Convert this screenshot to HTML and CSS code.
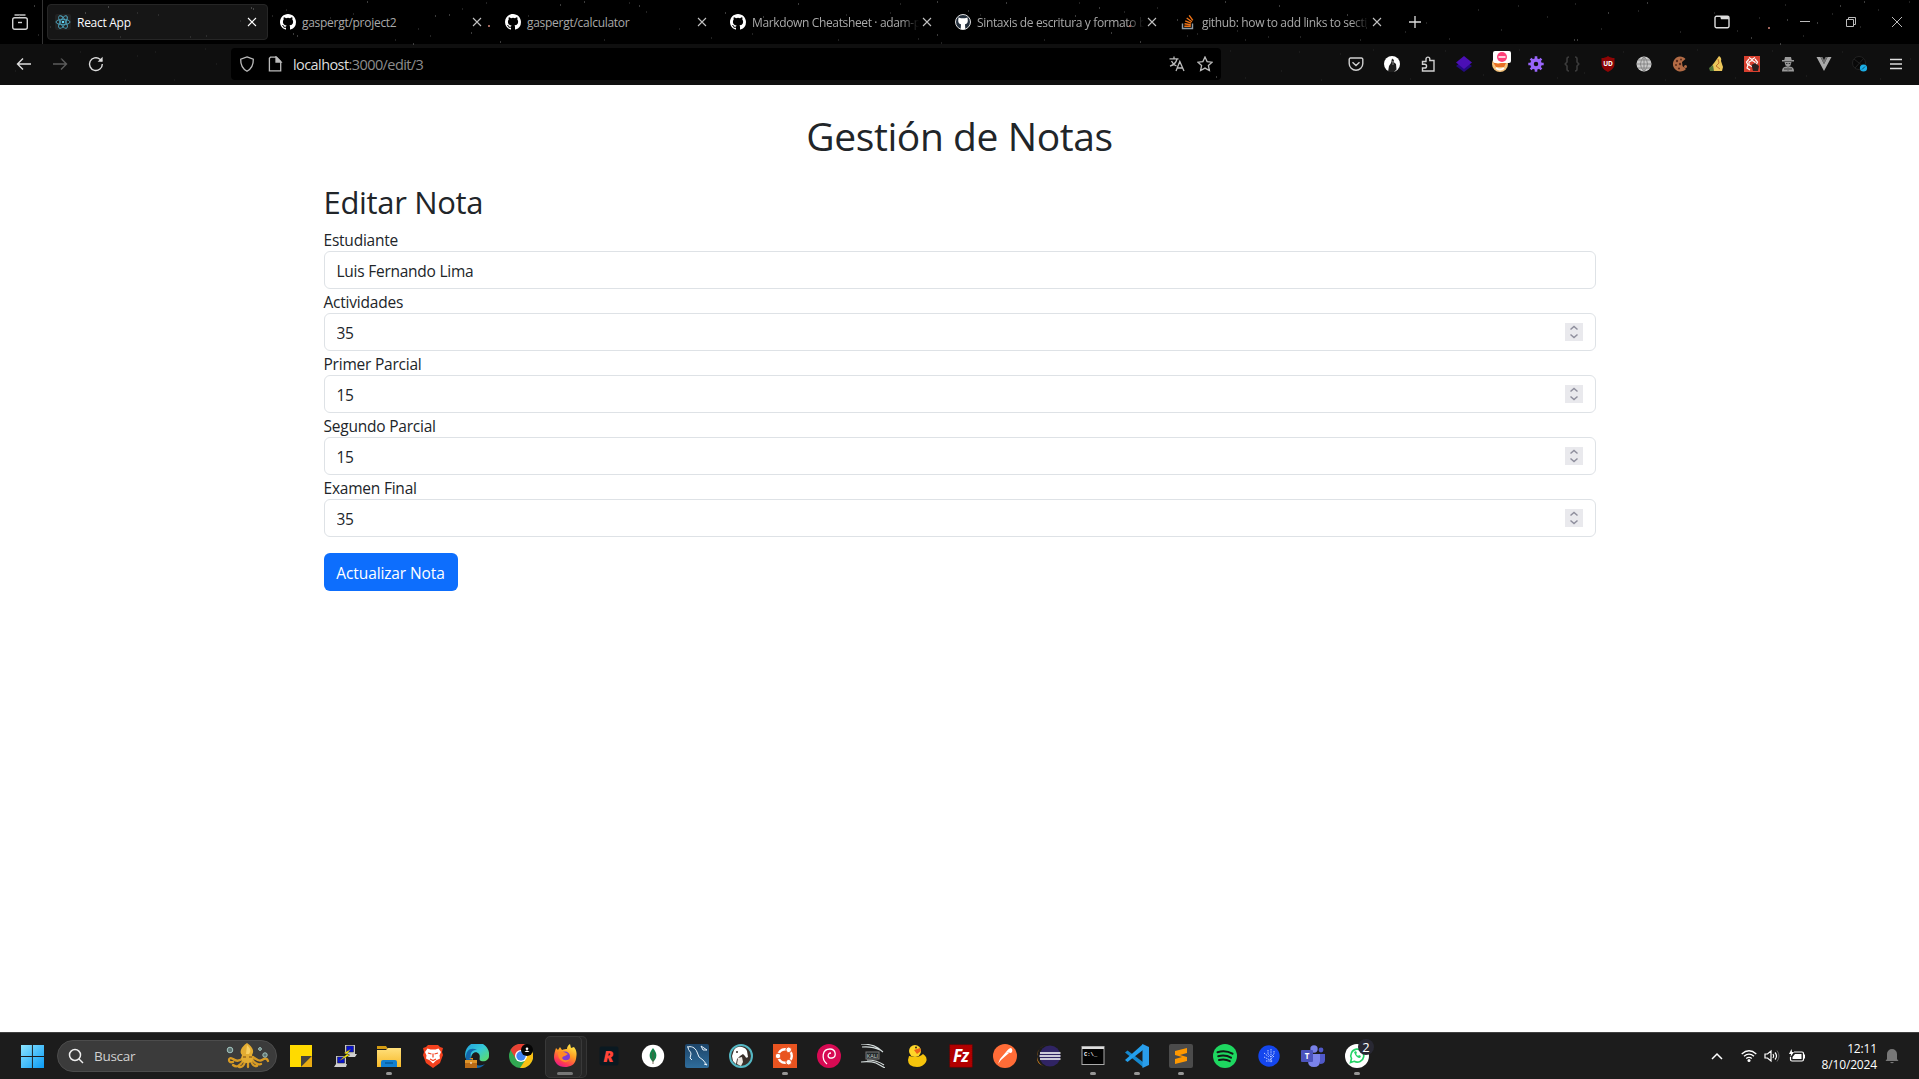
FILE: index.html
```html
<!DOCTYPE html>
<html lang="es">
<head>
<meta charset="utf-8">
<title>React App</title>
<link rel="stylesheet" href="styles.css">
</head>
<body>
<svg class="defs" width="0" height="0" aria-hidden="true">
  <defs>
    <linearGradient id="win" x1="0" y1="0" x2="1" y2="1"><stop offset="0" stop-color="#8be4ff"/><stop offset="1" stop-color="#0a9bf5"/></linearGradient>
    <linearGradient id="fold" x1="0" y1="0" x2="0" y2="1"><stop offset="0" stop-color="#ffe07c"/><stop offset="1" stop-color="#f7b928"/></linearGradient>
    <linearGradient id="edge" x1="0" y1="0" x2="1" y2="1"><stop offset="0" stop-color="#1f9de0"/><stop offset=".5" stop-color="#35c9d8"/><stop offset="1" stop-color="#62df5a"/></linearGradient>
    <linearGradient id="fox" x1=".8" y1="0" x2=".3" y2="1"><stop offset="0" stop-color="#fff04a"/><stop offset=".45" stop-color="#ff9a22"/><stop offset=".8" stop-color="#ff3b52"/><stop offset="1" stop-color="#e6198c"/></linearGradient>
    <linearGradient id="sql" x1="0" y1="0" x2="0" y2="1"><stop offset="0" stop-color="#1d4468"/><stop offset="1" stop-color="#2f6d9c"/></linearGradient>
    <symbol id="close" viewBox="0 0 16 16"><path d="M4 4l8 8M12 4l-8 8" fill="none" stroke="currentColor" stroke-width="1.1"/></symbol>
    <symbol id="github" viewBox="0 0 16 16"><path fill="#fff" d="M8 0C3.58 0 0 3.58 0 8c0 3.54 2.29 6.53 5.47 7.59.4.07.55-.17.55-.38 0-.19-.01-.82-.01-1.49-2.01.37-2.53-.49-2.69-.94-.09-.23-.48-.94-.82-1.13-.28-.15-.68-.52-.01-.53.63-.01 1.08.58 1.23.82.72 1.21 1.87.87 2.33.66.07-.52.28-.87.51-1.07-1.78-.2-3.64-.89-3.64-3.95 0-.87.31-1.59.82-2.15-.08-.2-.36-1.02.08-2.12 0 0 .67-.21 2.2.82a7.6 7.6 0 0 1 4 0c1.53-1.04 2.2-.82 2.2-.82.44 1.1.16 1.92.08 2.12.51.56.82 1.27.82 2.15 0 3.07-1.87 3.75-3.65 3.95.29.25.54.73.54 1.48 0 1.07-.01 1.93-.01 2.2 0 .21.15.46.55.38A8.01 8.01 0 0 0 16 8c0-4.42-3.58-8-8-8z"/></symbol>
  </defs>
</svg>

<header class="browser">
  <svg class="stars" viewBox="0 0 1919 85" aria-hidden="true">
    <path stroke="#777" d="M85 13h1M108 7h1M34 6h1M253 9h1M251 8h1M293 34h1M297 36h1M367 2h1M435 16h1M449 15h1M471 33h1M413 44h1M560 5h1M584 2h1M639 6h1M500 42h1M725 13h1M798 4h1M763 17h1M937 2h1M937 35h1M968 11h1M1006 3h1M1111 33h1M1099 8h1M1140 42h1M1075 16h1M1225 2h1M1279 6h1M1177 20h1M1347 15h1M1574 40h1M1577 40h1M1608 13h1M1647 3h1M1751 38h1M1780 44h1M1787 20h1M1817 23h1M1840 6h1M1864 2h1M1216 77h1"/>
    <path stroke="#444" d="M19 16h1M38 35h1M50 27h1M120 37h1M137 13h1M158 15h1M190 37h1M206 36h1M240 21h1M272 16h1M286 10h1M330 18h1M353 14h1M341 27h1M363 24h1M395 40h1M418 29h1M430 36h1M462 9h1M486 3h1M528 16h1M542 29h1M574 24h1M604 40h1M629 3h1M646 12h1M679 29h1M711 38h1M752 34h1M789 28h1M838 40h1M846 15h1M890 13h1M900 4h1M918 39h1M941 43h1M980 15h1M1028 24h1M1044 40h1M1079 3h1M1124 12h1M1157 8h1M1187 36h1M1197 34h1M1237 31h1M1245 40h1M1268 37h1M1300 37h1M1316 18h1M1360 40h1M1366 28h1M1405 32h1M1426 23h1M1449 39h1M1478 10h1M1501 30h1M1518 6h1M1547 17h1M1575 4h1M1601 29h1M1638 11h1M1680 32h1M1714 13h1M1737 31h1M1759 18h1M1785 5h1M1803 36h1M1832 14h1M1860 27h1M1878 10h1M1909 2h1"/>
    <path stroke="#292929" d="M15 71h1M61 59h1M80 52h1M125 80h1M137 56h1M155 52h1M174 80h1M216 64h1M205 49h1M1230 51h1M1245 78h1M1281 71h1M1299 52h1M1321 80h1M1340 54h1M1373 50h1M1410 79h1M1445 51h1M1483 75h1M1519 50h1M1557 78h1M1584 73h1M1623 52h1M1665 80h1M1697 50h1M1735 78h1M1772 51h1M1806 76h1M1842 52h1M1880 79h1M1910 59h1"/>
    <path stroke="#a0645a" stroke-width="2" d="M488 26h2M1768 28h2M1129 26h2"/>
  </svg>
  <div class="tabbar">
    <div class="tabview"><svg width="16" height="16" viewBox="0 0 16 16" fill="none" stroke="#d2d2d2" stroke-width="1.4"><path d="M2.500 1h11"/><rect x=".7" y="3.800" width="14.600" height="11.500" rx="2"/><path d="M6 8.500h4"/></svg></div>
    <div class="tabs">
      <div class="tab active"><svg class="fav" viewBox="0 0 16 16"><rect width="16" height="16" rx="2" fill="#222"/><g fill="none" stroke="#4ea6c0" stroke-width=".9"><ellipse cx="8" cy="8" rx="7" ry="2.700"/><ellipse cx="8" cy="8" rx="7" ry="2.700" transform="rotate(60 8 8)"/><ellipse cx="8" cy="8" rx="7" ry="2.700" transform="rotate(120 8 8)"/></g><circle cx="8" cy="8" r="1.300" fill="#61dafb"/></svg><span class="title">React App</span><svg class="x"><use href="#close"/></svg></div>
      <div class="tab"><svg class="fav"><use href="#github"/></svg><span class="title">gaspergt/project2</span><svg class="x"><use href="#close"/></svg></div>
      <div class="tab"><svg class="fav"><use href="#github"/></svg><span class="title">gaspergt/calculator</span><svg class="x"><use href="#close"/></svg></div>
      <div class="tab"><svg class="fav"><use href="#github"/></svg><span class="title long">Markdown Cheatsheet · adam-p</span><svg class="x"><use href="#close"/></svg></div>
      <div class="tab"><svg class="fav" viewBox="0 0 16 16"><circle cx="8" cy="8" r="7.500" fill="#24303d" stroke="#ddd"/><path fill="#fff" d="M3.500 3.500 6 4.300h4l2.500-.8.3 3.200c0 2.400-1.300 3.300-2.800 3.600l.3 5H5.700l.3-5C4.500 10 3.200 9 3.200 6.700z"/></svg><span class="title long">Sintaxis de escritura y formato b</span><svg class="x"><use href="#close"/></svg></div>
      <div class="tab"><svg class="fav" viewBox="0 0 16 16"><path d="M2.500 9.500v5h10v-5" fill="none" stroke="#8f9ba5" stroke-width="1.400"/><path d="M4.300 12.300h6.500M4.500 9.700l6.300 1.100M5.200 6.900l6 2.200M6.700 4l5.200 3.800M9.200 1.300l3.600 5" stroke="#f07316" stroke-width="1.400"/></svg><span class="title long">github: how to add links to secti</span><svg class="x"><use href="#close"/></svg></div>
    </div>
    <svg class="plus" width="16" height="16" viewBox="0 0 16 16"><path d="M8 2v12M2 8h12" stroke="#ddd" stroke-width="1.300"/></svg>
    <div class="window-buttons">
      <svg class="folder" width="16" height="14" viewBox="0 0 16 14"><path d="M2.500 1.200h11A1.500 1.500 0 0 1 15 2.700v8.600a1.500 1.500 0 0 1-1.500 1.500h-11A1.500 1.500 0 0 1 1 11.300V2.700a1.500 1.500 0 0 1 1.500-1.500z" fill="none" stroke="#ddd" stroke-width="1.400"/><path d="M6 1h8.500l.5 3.300H7z" fill="#ddd"/></svg>
      <svg viewBox="0 0 12 12"><path d="M1 5.500h10" stroke="#bbb"/></svg>
      <svg viewBox="0 0 12 12"><path d="M1.500 3.500h7v7h-7zM3.500 3V1.500h7v7H9" fill="none" stroke="#bbb"/></svg>
      <svg viewBox="0 0 12 12"><path d="M1 1l10 10M11 1L1 11" stroke="#bbb"/></svg>
    </div>
  </div>
  <div class="toolbar">
    <div class="nav">
      <svg viewBox="0 0 16 16"><path d="M15 8H1.500M7 2.500 1.500 8 7 13.500" stroke="#ddd"/></svg>
      <svg viewBox="0 0 16 16"><path d="M1 8h13.500M9 2.500 14.500 8 9 13.500" stroke="#5c5c5c"/></svg>
      <svg viewBox="0 0 16 16"><path d="M14.300 8A6.400 6.400 0 1 1 12 3.200L14 5" stroke="#ddd"/><path d="M14.600.8v5H9.600z" fill="#ddd"/></svg>
    </div>
    <div class="urlbar">
      <svg viewBox="0 0 16 16"><path d="M8 .9l6.300 2.300C14.500 9 12 13 8 15.200 4 13 1.500 9 1.700 3.200z"/></svg>
      <svg class="page" viewBox="0 0 16 16"><path d="M3.500 1.200h6L13.700 5.500v9.300H2.400V2.300z"/><path d="M9 1v5h5z" fill="#bbb"/></svg>
      <span class="url"><b>localhost</b>:3000/edit/3</span>
      <svg viewBox="0 0 16 16"><path d="M.5 2.800h9M5 .6v2M8 3c-.8 3.500-3.500 6-7 7.200M2.500 5c1 2.300 3 4.200 5 5M7 15l3.800-9.500L15 15M8.500 12h5"/></svg>
      <svg viewBox="0 0 16 16"><path d="M8 1l2.100 4.600 5 .6-3.700 3.400 1 5L8 12.100l-4.400 2.500 1-5L.9 6.200l5-.6z"/></svg>
    </div>
    <div class="extensions">
      <svg viewBox="0 0 16 16" fill="none" stroke="#d0d0d0" stroke-width="1.400"><path d="M2.500 2h11a1.300 1.300 0 0 1 1.300 1.300V7.500a6.800 6.800 0 0 1-13.600 0V3.300A1.300 1.300 0 0 1 2.500 2zM4.500 6.200 8 9.500l3.500-3.300"/></svg>
      <svg viewBox="0 0 16 16"><circle cx="8" cy="8" r="8" fill="#fff"/><path d="M8 2.500l2 1.500-.5 2 2.500 2 .5 5.500L10 16H4l1-6 2-3z" fill="#1e1e1e"/><path d="M7 5l2 1v3" stroke="#888" fill="none"/></svg>
      <svg viewBox="0 0 16 16" fill="none" stroke="#d0d0d0" stroke-width="1.400"><path d="M6 4.500V3a1.900 1.900 0 0 1 3.800 0v1.500H14v10.500H2.500V12h2.200a1.800 1.800 0 0 0 0-3.700H2.500V5.500H6z"/></svg>
      <svg viewBox="0 0 16 16"><path d="M0 10 8 4l8 6-8 6z" fill="#240a82"/><path d="M0 6.500 8 0l8 6.500L8 13z" fill="#4b0fb5"/></svg>
      <span class="blocked"><svg viewBox="0 0 16 16"><circle cx="8" cy="8" r="8" fill="#f6c47c"/><path d="M1 6l5 2 9-3-3 6H4z" fill="#e97025"/><path d="M4 12q4 3 8 0" stroke="#fff" stroke-width="2" fill="none"/></svg><i><svg viewBox="0 0 10 10"><circle cx="5" cy="5" r="5" fill="#ff3f78"/><path d="M1.500 5h7" stroke="#fff" stroke-width="1.500"/></svg></i></span>
      <svg viewBox="0 0 16 16"><circle cx="8" cy="8" r="4" fill="none" stroke="#9965fa" stroke-width="3.500"/><path d="M8 .3v4M8 11.700v4M.3 8h4M11.700 8h4M2.600 2.600l2.500 2.500M10.900 10.900l2.500 2.500M13.400 2.600l-2.500 2.500M5.100 10.900l-2.500 2.500" stroke="#9965fa" stroke-width="2.600"/></svg>
      <svg viewBox="0 0 16 16" fill="none" stroke="#3b3b3b" stroke-width="1.600"><path d="M5 1Q3 1 3 3v3L1.200 8 3 10v3q0 2 2 2M11 1q2 0 2 2v3l1.800 2L13 10v3q0 2-2 2"/></svg>
      <svg viewBox="0 0 16 16"><path d="M8 0c2 1.500 4 2 6.500 2v6c0 4-3 6-6.500 8-3.500-2-6.500-4-6.500-8V2C4 2 6 1.500 8 0z" fill="#8e0505"/><text x="8" y="9.800" text-anchor="middle" font-size="6.500" font-weight="700" fill="#fff">UD</text></svg>
      <svg viewBox="0 0 16 16"><circle cx="8" cy="8" r="7.500" fill="#c9c9c9"/><path d="M.5 8h15M8 .5v15M2 4h12M2 12h12M8 .5Q1 8 8 15.500Q15 8 8 .5" stroke="#7a7a7a" stroke-width=".8" fill="none"/></svg>
      <svg viewBox="0 0 16 16"><path d="M8 .5c2 0 4.500 1 5.500 2.500L10 6l.5 4 3.500 3A7.500 7.500 0 1 1 8 .5z" fill="#b26b45"/><g fill="#5a2c1d"><circle cx="5" cy="5" r="1.200"/><circle cx="9" cy="3.500" r="1"/><circle cx="4" cy="9" r="1"/><circle cx="8" cy="8" r="1.200"/><circle cx="7" cy="12.500" r="1.100"/></g><circle cx="13.500" cy="10.500" r="1.500" fill="#b26b45"/></svg>
      <svg viewBox="0 0 16 16"><path d="M11 0q3 2 2 5l2 6-1 4H3l-1-3 4-5z" fill="#ecc75b"/><path d="M1 12l4-3 1 6H2z" fill="#52753c"/><path d="M10 3l1 4-3 3 4 3" stroke="#b85d22" stroke-width=".8" fill="none"/></svg>
      <svg viewBox="0 0 16 16"><rect width="16" height="16" fill="#d8402f"/><path d="M5 1.500l3 2 3-2M5 3l-2.500 3L4 9l-1 3 3 2M11 3l2.500 3L12 9M5 6l3-1.500L11 6v3l-3 1.500L5 9z" fill="none" stroke="#fff" stroke-width="1.200"/><path d="M7.500 9 11 7l4 3-1 5H9z" fill="#29201f"/></svg>
      <svg viewBox="0 0 16 16" fill="#999"><path d="M5 1h6l.7 3H14v1.400H2V4h2.300z"/><path d="M4.500 6h7l-1 3.500-2.500 1-2.500-1zM2 15.500C2 11.500 4 10.500 8 10.500s6 1 6 5z"/><path d="M6 7.500h1.500M8.700 7.500h1.500M8 11.500v3M4 13h3M9 13h3" stroke="#333"/></svg>
      <svg viewBox="0 0 16 16"><path d="M.5 1h4L8 8l3.500-7h4L8 15z" fill="#a9a9a9"/><path d="M4.500 1h2L8 4l1.500-3h2L8 8z" fill="#747474"/></svg>
      <svg viewBox="0 0 16 16"><circle cx="7" cy="7" r="6.500" fill="#080808" stroke="#222"/><path d="M2 3l10 8M12 2 3 12" stroke="#222"/><circle cx="11.500" cy="12" r="3.600" fill="#1caee5"/><path d="M10 13.500l3-3" stroke="#074b70"/></svg>
      <svg viewBox="0 0 16 16"><path d="M2 3.500h12M2 8h12M2 12.500h12" stroke="#ddd" stroke-width="1.300"/></svg>
    </div>
  </div>
</header>

<main class="page-body">
  <h1>Gestión de Notas</h1>
  <form class="note-form">
    <h2>Editar Nota</h2>
    <label for="student">Estudiante</label>
    <div class="control"><input id="student" value="Luis Fernando Lima"></div>
    <label for="activities">Actividades</label>
    <div class="control"><input id="activities" value="35"><svg class="spin" viewBox="0 0 18 18"><path d="M5.500 6.500 9 3.500l3.500 3M5.500 11.500l3.500 3 3.500-3"/></svg></div>
    <label for="first">Primer Parcial</label>
    <div class="control"><input id="first" value="15"><svg class="spin" viewBox="0 0 18 18"><path d="M5.500 6.500 9 3.500l3.500 3M5.500 11.500l3.500 3 3.500-3"/></svg></div>
    <label for="second">Segundo Parcial</label>
    <div class="control"><input id="second" value="15"><svg class="spin" viewBox="0 0 18 18"><path d="M5.500 6.500 9 3.500l3.500 3M5.500 11.500l3.500 3 3.500-3"/></svg></div>
    <label for="final">Examen Final</label>
    <div class="control"><input id="final" value="35"><svg class="spin" viewBox="0 0 18 18"><path d="M5.500 6.500 9 3.500l3.500 3M5.500 11.500l3.500 3 3.500-3"/></svg></div>
    <button type="button" class="submit">Actualizar Nota</button>
  </form>
</main>

<footer class="taskbar">
  <svg class="start" viewBox="0 0 24 24"><path fill="url(#win)" d="M0 0h11.400v11.400H0zM12.400 0H24v11.400H12.400zM0 12.400h11.400V24H0zM12.400 12.400H24V24H12.400z"/></svg>
  <div class="search">
    <svg class="lens" viewBox="0 0 16 16" fill="none" stroke="#eee" stroke-width="1.500"><circle cx="7" cy="7" r="5.500"/><path d="M11 11l4 4"/></svg>
    <span>Buscar</span>
    <svg class="octopus" viewBox="0 0 44 26"><g fill="none" stroke="#d79a24" stroke-width="2.300" stroke-linecap="round"><path d="M17 15Q12 20 7 16q-4-2-4 1 0 3 4 2M17 18Q12 26 7 22M19 19q-2 6-6 5M22 19v5M25 18q2 6 6 5M26 16q4 7 9 5M27 14q6 5 9 3 5-3 6 1"/></g><path d="M21 0c7 5 7 9 5 12 2 6 0 8-5 8s-7-3-5-8c-3-3-1-8 5-12z" fill="#e3ac32"/><path d="M21 2c4 4 4 6 2 9h-3z" fill="#f8cf62"/><path d="M17 14h3M23 14h3" stroke="#724712"/><g fill="#5e7473" stroke="#a4c5bf"><circle cx="4" cy="7" r="2.800"/><circle cx="34" cy="6" r="1.400"/><circle cx="39" cy="12" r="2.200"/></g></svg>
  </div>
  <div class="apps">
    <span><svg viewBox="0 0 24 24"><path d="M1 1h22v11L12 23H1z" fill="#ffda00"/><path d="M12 12h11L12 23z" fill="#46433b"/><path d="M23 12v11H12z" fill="#e9ab13"/></svg></span>
    <span><svg viewBox="0 0 24 24"><path d="M12 1h10v9H12zM3 12h10v8H3z" fill="#c7c7c7"/><path d="M13.500 2h7v6h-7zM4.500 13h7v6h-7z" fill="#0812d0" stroke="#222" stroke-width=".5"/><path d="M16 10h8l-2 3h-7zM3 20h11l-1 3H1z" fill="#d0d0d0"/><path d="M18 5l-7 4 3 1-8 7 11-6-3-1z" fill="#ffef00" stroke="#333" stroke-width=".4"/></svg></span>
    <span class="open"><svg viewBox="0 0 24 24"><path d="M0 2h9l2 3H0z" fill="#d39b12"/><path d="M0 6h9l2-2h13v19H0z" fill="url(#fold)"/><path d="M4 18q0-2 2-2h12q2 0 2 2v5H4z" fill="#1380d1"/><path d="M8 19h8" stroke="#075b9a" stroke-width="1.500"/></svg></span>
    <span><svg viewBox="0 0 24 24"><path d="M7 1h10l2 2 3 1-1 4 1 3-3 8-7 5-7-5-3-8 1-3-1-4 3-1z" fill="#f3411e"/><path d="M6.500 4.500l3 1h5l3-1L20 8l-1.500 3.500.5 3-4 2-3 3-3-3-4-2 .5-3L4 8z" fill="#fff"/><path d="M7 9l3.500 1M17 9l-3.500 1M12 9.500v4M9 15l3 1.500 3-1.500" stroke="#f3411e" stroke-width="1.200" fill="none"/></svg></span>
    <span><svg viewBox="0 0 24 24"><path d="M1 15A12 12 0 1 1 24 12c0 4-4 6-8 5-3-1 0-4-2-7-3-4-8-1-8 5z" fill="url(#edge)"/><path d="M1 15C0 5 7 3 12 6c-6-1-8 5-5 10 3 7 10 6 13 4-3 3-6 4-8 4C6 24 1 20 1 15z" fill="#1267ac"/><path d="M0 16h12v8H0z" fill="#b86a17"/><path d="M0 16h12v3H0zM4 14h4v2" fill="#df9429"/><path d="M6 18v2" stroke="#fff"/></svg></span>
    <span><svg viewBox="0 0 24 24"><circle cx="12" cy="12" r="12" fill="#31a852"/><path d="M1.500 6A12 12 0 0 1 22.500 6H12L7 15z" fill="#e94234"/><path d="M22.500 6A12 12 0 0 1 11 24l6-9V6z" fill="#fac114"/><circle cx="12" cy="12" r="6" fill="#fff"/><circle cx="12" cy="12" r="4.700" fill="#4285f4"/><circle cx="18" cy="6" r="6" fill="#050505"/><circle cx="18" cy="4.800" r="1.300" fill="#fff"/><path d="M15.500 8q2.500-3 5 0z" fill="#fff"/></svg></span>
    <span class="open current"><svg viewBox="0 0 24 24"><path d="M3 4l2 2 2-3 2 3c2-1 4-1 5-1 0-2 1-4 3-5l1 4 3-1c3 4 3 7 2 12-1 6-6 8-11 8C5 23 1 18 1 13c0-3 1-6 2-9z" fill="url(#fox)"/><circle cx="12" cy="12.500" r="5" fill="#7a3bd5"/><path d="M5 9q4-3 8 0l2 1-3 2q-2 0-3 2 2 4 8 1-3 5-8 2-4-2-4-8z" fill="#ff8a26"/></svg></span>
    <span><svg viewBox="0 0 24 24"><rect x="2.500" y="2.500" width="19" height="19" rx="2" fill="#0a1921"/><text x="11.500" y="17.500" text-anchor="middle" class="script-r">R</text></svg></span>
    <span><svg viewBox="0 0 24 24"><circle cx="12" cy="12" r="11.200" fill="#fff"/><path d="M12 4c5 6 4 10 0 14-4-4-5-8 0-14z" fill="#12834a"/><path d="M12 8v12" stroke="#64503e" stroke-width=".8"/></svg></span>
    <span><svg viewBox="0 0 24 24"><rect width="24" height="24" rx="2" fill="url(#sql)"/><path d="M2 3c4-1 8 0 10 5l2 5 4 3 4 5-3-1M3 3c0 4 3 4 3 7l-1 4 2 2M16 2l6 4-4 0z" fill="none" stroke="#e7f2fa"/></svg></span>
    <span><svg viewBox="0 0 24 24"><circle cx="12" cy="12" r="11" fill="#3a302b" stroke="#54b7c4" stroke-width="2"/><path d="M5 6q3-4 8-3 4 1 5 4l1 6q-2 2-3-1l-2-2-3 2-3 3-1 5-3-3-1-5z" fill="#fff"/><path d="M9 14l4-1 1 5-2 4-4-2z" fill="#ece7e2"/><path d="M7 8h2" stroke="#302824" stroke-width="1.500"/></svg></span>
    <span class="open"><svg viewBox="0 0 24 24"><rect width="24" height="24" fill="#e95420"/><circle cx="12" cy="12" r="6.800" fill="none" stroke="#fff" stroke-width="2.400"/><g fill="#fff" stroke="#e95420"><circle cx="5" cy="12" r="2.800"/><circle cx="15.700" cy="5.800" r="2.800"/><circle cx="15.700" cy="18.200" r="2.800"/></g></svg></span>
    <span><svg viewBox="0 0 24 24"><circle cx="12" cy="12" r="12" fill="#d70a53"/><path d="M10 20C4 15 5 5 13 5c6 0 7 8 2 9-5 1-5-5-1-5" fill="none" stroke="#fff" stroke-width="1.300"/></svg></span>
    <span><svg viewBox="0 0 24 24"><path d="M0 0c8 0 14 2 17 4l5 4M1 3q10-1 18 3M0 18q9-1 15 1l9 5M6 16q10 0 17 5" fill="none" stroke="#d5dddd" stroke-width="1.200"/><rect x="5" y="8" width="13" height="7" fill="#242b2d" stroke="#777"/><text x="11.500" y="13.700" text-anchor="middle" font-size="5.500" fill="#ccc">KALI</text></svg></span>
    <span><svg viewBox="0 0 24 24"><path d="M4 12l6 1q5 0 8-3 5 3 3 8-3 5-9 5-9 0-9-7z" fill="#f6c40c"/><circle cx="10" cy="7" r="6" fill="#ffd529"/><path d="M9 6l6-2 1 3-4 3z" fill="#ec6318"/><circle cx="11" cy="3.500" r="1" fill="#372b15"/></svg></span>
    <span><svg viewBox="0 0 24 24"><rect x=".7" y=".7" width="22.600" height="22.600" fill="#b20000" stroke="#680000" stroke-dasharray="1 1"/><text x="12" y="18" text-anchor="middle" font-size="17" font-weight="700" font-style="italic" fill="#fff" textLength="16">Fz</text></svg></span>
    <span><svg viewBox="0 0 24 24"><circle cx="12" cy="12" r="12" fill="#ff6c37"/><path d="M18 4a3 3 0 0 1 0 5l-5-1q3-4 5-4zM13 8l3 1-8 7-3 4 2-5z" fill="#fff"/></svg></span>
    <span><svg viewBox="0 0 24 24"><path d="M11 1a11 11 0 0 0 0 22C1 22 -1 16 .3 11 1 5 5 1 11 1z" fill="#ef941d"/><circle cx="13" cy="12" r="10.500" fill="#302464"/><path d="M3 9h20.500M2.500 12h21M3 15h20.500" stroke="#fff" stroke-width="1.500"/></svg></span>
    <span class="open"><svg viewBox="0 0 24 24"><rect x="1" y="2.500" width="22" height="18" fill="#030303" stroke="#aaa"/><path d="M1 4h22" stroke="#ddd" stroke-width="2"/><text x="3" y="11.500" class="prompt">C:\_</text></svg></span>
    <span class="open"><svg viewBox="0 0 24 24"><path d="M0 8.500 2.500 6.500 18 18v5z" fill="#1588ce"/><path d="M0 16 18 0v6L2.500 18z" fill="#23a0ee"/><path d="M17.500 0l6.500 3v18l-6.500 3z" fill="#2a9dea"/></svg></span>
    <span class="open"><svg viewBox="0 0 24 24"><rect width="24" height="24" rx="2" fill="#4b4b4b"/><path d="M18 4v5l-7 2 7 2v4L6 20v-5l7-2-7-2V7z" fill="#ff9800"/></svg></span>
    <span><svg viewBox="0 0 24 24"><circle cx="12" cy="12" r="12" fill="#1ed760"/><path d="M4.500 8.200q8-2.500 15 1.500M5.200 12.200q7-2 12.800 1.500M6 16q6-1.500 10.800 1.200" fill="none" stroke="#121b15" stroke-width="2" stroke-linecap="round"/></svg></span>
    <span><svg viewBox="0 0 24 24"><circle cx="12" cy="12" r="10.700" fill="#1446ee"/><path d="M14 5v14M11 6v4l3 3M17 7v3l-3 3M7 9l5 4M17 12l-4 4M7 13l6 3M9 17h7" fill="none" stroke="#b9cbff" stroke-dasharray="1.500 .8"/></svg></span>
    <span><svg viewBox="0 0 24 24"><circle cx="13" cy="5" r="3.700" fill="#7880e8"/><circle cx="20" cy="6" r="2.400" fill="#5059c9"/><path d="M17 10h7v6q0 4-5 4z" fill="#5059c9"/><path d="M8 10h11v7q0 6-6 6t-6-6z" fill="#7b83eb"/><rect y="6" width="12" height="12" rx="1" fill="#4b53bc"/><text x="6" y="15" text-anchor="middle" font-size="8" font-weight="700" fill="#fff">T</text></svg></span>
    <span class="open whatsapp"><svg viewBox="0 0 24 24"><circle cx="12" cy="12" r="12" fill="#fff"/><path d="M5.500 18.500l1-4a6.500 6.500 0 1 1 2.700 2.800z" fill="none" stroke="#25d366" stroke-width="1.600"/><path d="M9 8q2 6 6 6l1-2-2-1-1 1-2-2 1-1-1-2z" fill="#25d366"/></svg><b>2</b></span>
  </div>
  <div class="tray">
    <svg class="chev" viewBox="0 0 12 12"><path d="M1 9l5-5 5 5" fill="none" stroke="#fff" stroke-width="1.500"/></svg>
    <svg class="wifi" viewBox="0 0 16 14"><path d="M.7 5Q8-1.500 15.300 5M3 7.300Q8 3 13 7.300M5.200 9.500Q8 7.300 10.800 9.500" fill="none" stroke="#fff" stroke-width="1.300"/><circle cx="8" cy="11.500" r="1.500" fill="#fff"/></svg>
    <svg class="vol" viewBox="0 0 16 14"><path d="M1 5h2.500L7 2v10L3.500 9H1zM9 5q1.500 2 0 4M11 3.500q3 3.500 0 7" fill="none" stroke="#fff" stroke-width="1.200"/><path d="M13 1.500q4 5.500 0 11" fill="none" stroke="#666"/></svg>
    <svg class="bat" viewBox="0 0 16 14"><path d="M5 3h8q1.500 0 1.500 1.500v6Q14.500 12 13 12H3Q1.500 12 1.500 10.500V8" fill="none" stroke="#fff" stroke-width="1.200"/><path d="M6 5h6.500v5h-9V8zM15 5.500h1v4h-1zM2.500 0 0 5h2L1.500 8 5 3H3z" fill="#fff"/></svg>
    <div class="clock"><span>12:11</span><span>8/10/2024</span></div>
    <svg class="bell" viewBox="0 0 14 16"><path d="M2 11V6a5 5 0 0 1 10 0v5l1.500 2H.500zM5 14h4q-2 2.500-4 0z" fill="#777"/></svg>
  </div>
</footer>
</body>
</html>
```
FILE: styles.css
```css
* { box-sizing: border-box; }
body {
  margin: 0;
  height: 1079px;
  display: flex;
  flex-direction: column;
  overflow: hidden;
  background: #fff;
  color: #212529;
  font: 15.5px/24px "Open Sans", "Noto Sans", sans-serif;
}
svg { display: block; flex: none; }
.defs { position: absolute; }

/* Browser chrome */
.browser { position: relative; height: 85px; flex: none; background: #000; color: #fff; }
.stars { position: absolute; inset: 0; width: 1919px; height: 85px; z-index: 1; pointer-events: none; }
.tabbar { display: flex; align-items: center; height: 44px; }
.tabview { width: 43px; height: 44px; border-right: 1px solid #333; display: flex; align-items: center; padding-left: 12px; }
.tabs { display: flex; padding-left: 4px; }
.tab { display: flex; align-items: center; width: 221px; height: 36px; margin-right: 4px; padding: 0 8px; border-radius: 4px; font-size: 12px; letter-spacing: -.28px; color: #a9a9a9; }
.tab.active { background: #161616; border: 1px solid #262626; padding: 0 7px; color: #fbfbfe; }
.fav { width: 16px; height: 16px; margin-right: 6px; }
.title { flex: 1; white-space: nowrap; padding-top: 2px; }
.title.long { width: 167px; letter-spacing: -.36px; mask-image: linear-gradient(to left, transparent, #000 18px); }
.x { width: 16px; height: 16px; color: #c2c2c2; }
.active .x { color: #fff; }
.plus { margin-left: 10px; }
.window-buttons { display: flex; align-items: center; margin-left: auto; padding-right: 16px; }
.window-buttons svg { width: 12px; height: 12px; margin-left: 34px; }
.window-buttons .folder { width: 16px; height: 14px; margin: 0 35px 0 0; }

.toolbar { display: flex; align-items: center; height: 41px; background: #0f0f0f; padding: 0 15px 1px 16px; }
.nav { display: flex; gap: 20px; width: 215px; }
.nav svg { width: 16px; height: 16px; fill: none; stroke-width: 1.4; }
.urlbar { display: flex; align-items: center; width: 990px; height: 32px; border-radius: 4px; background: #000; padding: 0 8px; gap: 12px; }
.urlbar svg { width: 16px; height: 16px; fill: none; stroke: #bbb; stroke-width: 1.3; }
.url { flex: 1; padding-top: 1px; font-size: 14.5px; letter-spacing: -.58px; color: #8c8c8c; margin-left: -2px; }
.url b { font-weight: 400; color: #ddd; }
.extensions { display: flex; gap: 20px; margin-left: auto; }
.extensions svg { width: 16px; height: 16px; }
.blocked { position: relative; }
.blocked i { position: absolute; left: 1px; top: -5px; width: 18px; height: 12px; border-radius: 2px; background: #fff; display: flex; justify-content: center; align-items: center; }
.blocked i svg { width: 10px; height: 10px; }

/* Page */
.page-body { flex: 1; width: 1272px; margin: 0 auto; padding-top: 24px; }
h1, h2 { font-weight: 400; }
h1 { margin: 0 0 24px; height: 48px; font-size: 39px; line-height: 54px; text-align: center; letter-spacing: -.42px; }
h2 { margin: 0 0 8px; height: 38px; font-size: 31px; line-height: 43px; letter-spacing: -.33px; }
.note-form { display: flex; flex-direction: column; align-items: stretch; }
.note-form label { height: 24px; padding-top: 1px; letter-spacing: -.22px; }
.control { display: flex; align-items: center; height: 38px; padding: 0 12px; border: 1px solid #dee2e6; border-radius: 6px; }
.control input { flex: 1; border: 0; padding: 2px 0 0; outline: 0; background: none; color: inherit; font: inherit; letter-spacing: -.25px; }
.spin { width: 18px; height: 18px; background: #e9e9ed; fill: none; stroke: #8f8f9d; stroke-width: 1.5; }
.submit { align-self: flex-start; width: 134px; height: 38px; margin-top: 16px; padding: 2px 0 0; border: 0; border-radius: 6px; background: #0d6efd; color: #fff; font: inherit; letter-spacing: -.12px; }

/* Taskbar */
.taskbar { display: flex; align-items: center; height: 47px; flex: none; background: #1c1c1c; border-top: 1px solid #404040; color: #fff; }
.start { width: 23px; height: 23px; margin: 1px 13px 0 21px; }
.search { display: flex; align-items: center; width: 220px; height: 32px; border: 1px solid #4c4c4c; border-radius: 16px; background: #3b3b3b; padding: 0 6px 0 10px; color: #d0d0d0; font-size: 13.5px; letter-spacing: -.3px; }
.lens { width: 16px; height: 16px; margin-right: 10px; }
.octopus { width: 44px; height: 26px; margin-left: auto; }
.apps { display: flex; margin-left: 2px; }
.apps > span { position: relative; display: flex; align-items: center; justify-content: center; width: 44px; height: 46px; }
.apps svg { position: relative; width: 24px; height: 24px; }
.apps .open::after { content: ""; position: absolute; bottom: 4px; width: 6px; height: 3px; border-radius: 2px; background: #969696; }
.apps .current::before { content: ""; position: absolute; left: 2px; top: 3px; width: 35px; height: 40px; border: 1px solid #393939; border-radius: 5px; background: #292929; box-shadow: 5px 0 0 -1px #252525, 5px 0 0 #353535; }
.apps .current::after { width: 16px; background: #777; }
.script-r { font: italic 800 16px "Open Sans", sans-serif; fill: #ff4438; }
.prompt { font: 700 5.5px "Liberation Mono", monospace; fill: #fff; }
.whatsapp b { position: absolute; right: 5px; top: 6px; width: 16px; height: 16px; border-radius: 8px; background: #282833; font: 13px/16px "Open Sans", sans-serif; text-align: center; }
.tray { display: flex; align-items: center; margin-left: auto; padding-right: 20px; }
.chev { width: 12px; height: 12px; margin-right: 18px; }
.wifi, .vol, .bat { width: 16px; height: 14px; margin-right: 7px; }
.vol { margin-right: 9px; }
.bat { margin-right: 0; }
.clock { display: flex; flex-direction: column; align-items: flex-end; width: 72px; font-size: 12px; line-height: 16px; letter-spacing: -.15px; padding-top: 1px; }
.bell { width: 14px; height: 16px; margin-left: 8px; }
```
